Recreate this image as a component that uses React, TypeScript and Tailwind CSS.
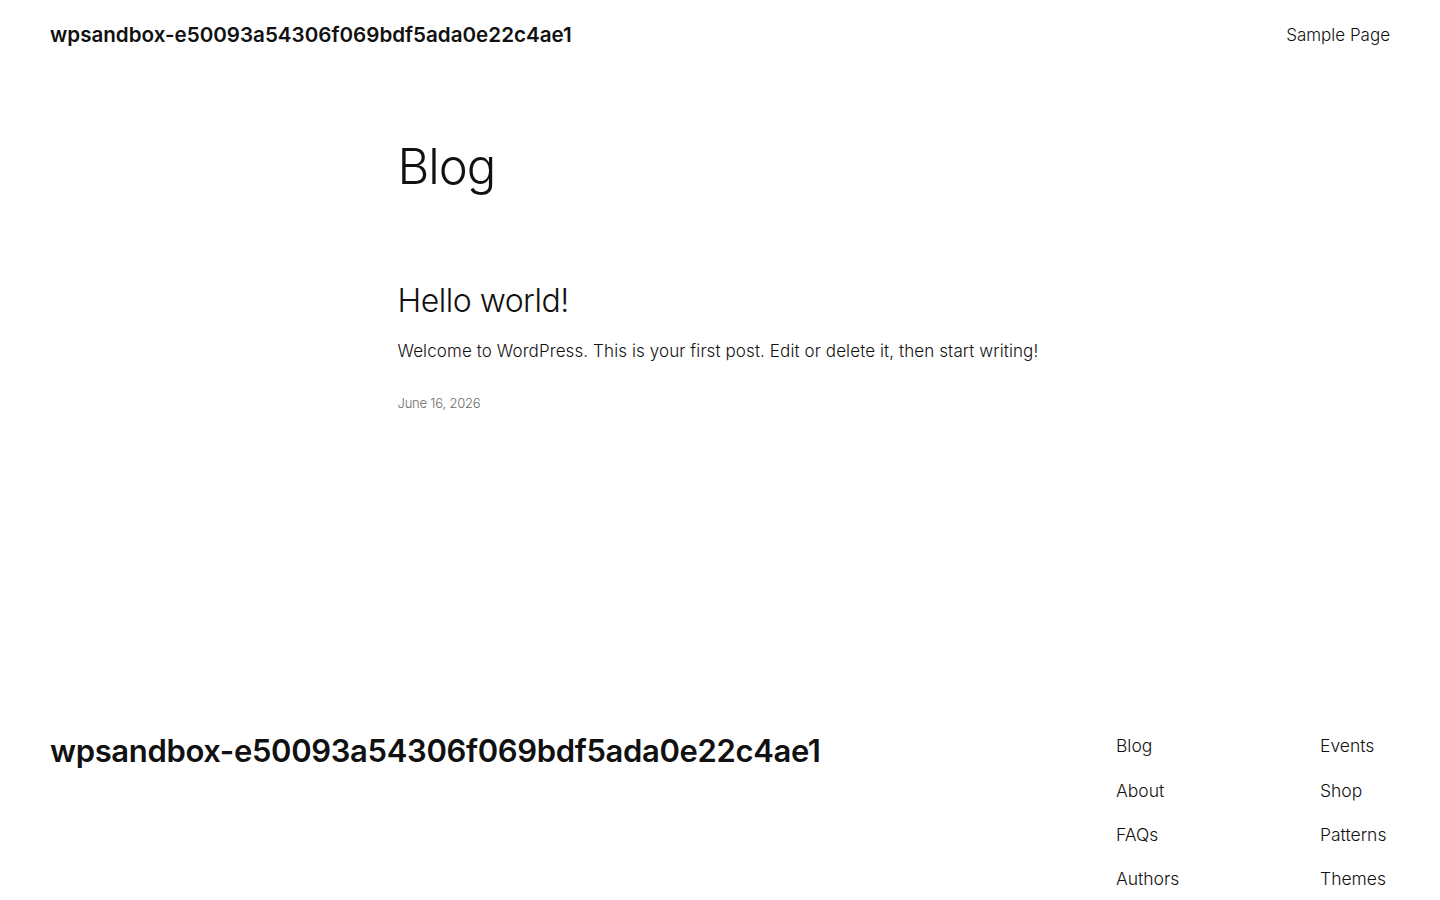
export default function App() {
  const navLeft = ['Blog', 'About', 'FAQs', 'Authors']
  const navRight = ['Events', 'Shop', 'Patterns', 'Themes']

  return (
    <div className="min-h-screen bg-white text-[#111111] font-['Inter',sans-serif]">
      <header className="flex items-center justify-between px-[50px] h-[70px] pt-[1px]">
        <a className="text-[20.6px] font-semibold">wpsandbox-e50093a54306f069bdf5ada0e22c4ae1</a>
        <nav className="text-[17px] font-light">Sample Page</nav>
      </header>

      <main className="mx-auto max-w-[645px] pt-[66px] pb-[290px]">
        <h1 className="text-[49px] font-light tracking-[-1px] leading-tight">Blog</h1>

        <article className="mt-[84px]">
          <h2 className="text-[32px] font-light tracking-[-0.5px] leading-tight">Hello world!</h2>
          <p className="mt-[18px] text-[17px] font-light tracking-[0.1px]">
            Welcome to WordPress. This is your first post. Edit or delete it, then start writing!
          </p>
          <p className="mt-[29px] text-[13px] font-light text-[#6b6b6b] tracking-[-0.2px]">June 16, 2026</p>
        </article>
      </main>

      <footer className="flex justify-between px-[50px]">
        <div className="text-[31px] font-semibold tracking-[-0.35px] pt-[25px]">wpsandbox-e50093a54306f069bdf5ada0e22c4ae1</div>
        <div className="flex">
          <ul className="w-[204px] flex flex-col gap-[18px] text-[17.5px] font-light pt-[30px]">
            {navLeft.map((n) => (
              <li key={n}>{n}</li>
            ))}
          </ul>
          <ul className="w-[70px] flex flex-col gap-[18px] text-[17.5px] font-light pt-[30px]">
            {navRight.map((n) => (
              <li key={n} className="whitespace-nowrap">{n}</li>
            ))}
          </ul>
        </div>
      </footer>
    </div>
  )
}
